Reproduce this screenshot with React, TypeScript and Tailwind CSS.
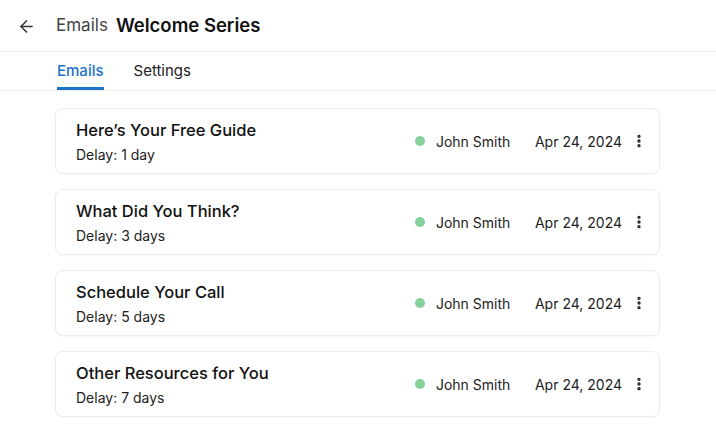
import { ArrowLeft, EllipsisVertical } from "lucide-react";

const emails = [
  { title: "Here\u2019s Your Free Guide", delay: "Delay: 1 day" },
  { title: "What Did You Think?", delay: "Delay: 3 days" },
  { title: "Schedule Your Call", delay: "Delay: 5 days" },
  { title: "Other Resources for You", delay: "Delay: 7 days" },
];

function EmailCard({ title, delay }: { title: string; delay: string }) {
  return (
    <div className="flex h-[66px] items-center rounded-lg border border-[#ececec] bg-white pl-5 pr-[12px] shadow-[0_1px_2px_rgba(0,0,0,0.04)]">
      <div className="flex-1">
        <div className="text-[16.5px] font-medium leading-6 text-[#111]">{title}</div>
        <div className="mt-[3px] text-[14px] leading-5 text-[#222]">{delay}</div>
      </div>
      <span className="h-[10px] w-[10px] rounded-full bg-[#86d19a]" />
      <span className="ml-[11px] w-[99px] text-[14px] text-[#222]">John Smith</span>
      <span className="text-[14px] text-[#222]">Apr 24, 2024</span>
      <EllipsisVertical className="ml-[9px] h-[16px] w-[16px] text-[#222]" strokeWidth={3} />
    </div>
  );
}

export default function App() {
  return (
    <div className="min-h-screen w-full bg-white font-['Inter',sans-serif]">
      {/* Header */}
      <div className="flex h-[52px] items-center border-b border-[#ececec] pl-[17px] pt-[1px]">
        <ArrowLeft className="h-[19px] w-[19px] text-[#333]" strokeWidth={2} />
        <span className="ml-[20px] text-[17px] text-[#444]">Emails</span>
        <span className="ml-[8px] text-[18.5px] font-semibold text-[#111]">Welcome Series</span>
      </div>

      {/* Tabs */}
      <div className="flex h-[39px] items-end gap-[30px] border-b border-[#ececec] pl-[57px]">
        <div className="border-b-[3px] border-[#1a73c8] pb-[5px] text-[15px] font-medium text-[#1a73c8]">Emails</div>
        <div className="pb-[8px] text-[15px] text-[#222]">Settings</div>
      </div>

      {/* Emails list */}
      <div className="ml-[55px] mt-[17px] flex w-[605px] flex-col gap-[15px]">
        {emails.map((e) => (
          <EmailCard key={e.title} title={e.title} delay={e.delay} />
        ))}
      </div>
    </div>
  );
}
